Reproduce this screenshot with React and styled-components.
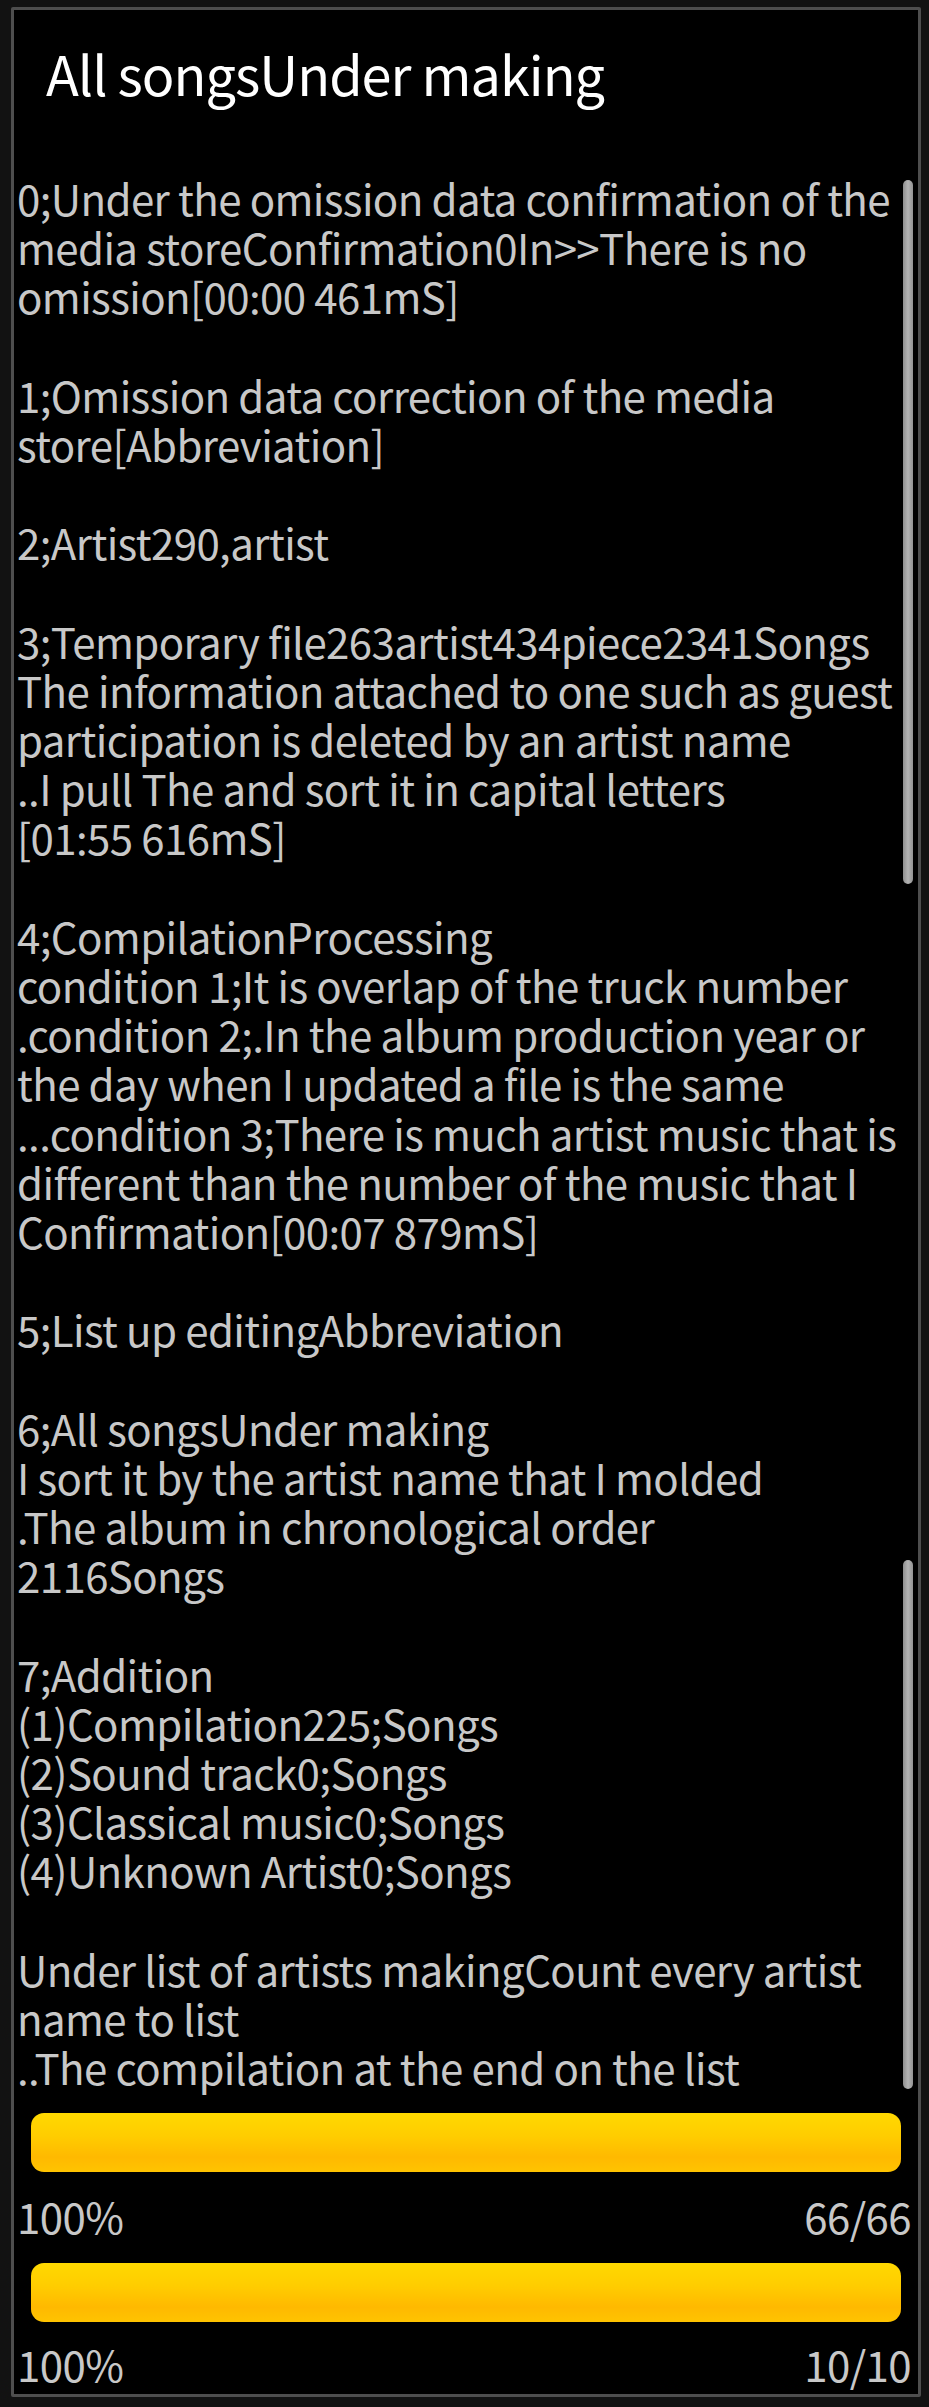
import React from "react";
import styled, { createGlobalStyle } from "styled-components";

const Global = createGlobalStyle`
  html, body { margin: 0; padding: 0; background: #121212; }
  body { font-family: "Noto Sans CJK JP", "Noto Sans", sans-serif; }
`;

const Screen = styled.div`
  width: 929px;
  height: 2407px;
  box-sizing: border-box;
  padding: 7px 8px 10px 11px;
  background: #121212;
`;

const Panel = styled.section`
  box-sizing: border-box;
  height: 100%;
  border: 3px solid #4e4e4e;
  border-radius: 2px;
  background: #000;
  display: flex;
  flex-direction: column;
`;

const Title = styled.h1`
  margin: 0;
  padding: 29px 0 0 32px;
  font-family: "Noto Sans CJK JP", "Noto Sans", sans-serif;
  font-weight: 400;
  font-size: 54px;
  letter-spacing: -1px;
  line-height: 68px;
  color: #fff;
  white-space: nowrap;
`;

const LogArea = styled.div`
  position: relative;
  margin-top: 66px;
  padding-left: 3px;
`;

const LogLine = styled.div`
  font-size: 42px;
  letter-spacing: -0.6px;
  line-height: 49.2px;
  height: 49.2px;
  color: #c8c8c8;
  white-space: pre;
`;

const ScrollThumb = styled.div`
  position: absolute;
  right: 5px;
  width: 10px;
  border-radius: 5px;
  background: linear-gradient(to right, #8e8e8e, #b4b4b4 50%, #939393);
`;

const Bar = styled.div`
  margin: ${(p) => p.$top}px 17px 0 17px;
  height: 59px;
  border-radius: 13px;
  background: linear-gradient(
    to bottom,
    #ffd900 0%,
    #ffcc00 40%,
    #ffb900 75%,
    #ffc400 100%
  );
`;

const LabelRow = styled.div`
  display: flex;
  justify-content: space-between;
  margin-top: ${(p) => p.$top}px;
  padding: 0 7px 0 3px;
  font-size: 42px;
  letter-spacing: -0.6px;
  line-height: 49.2px;
  color: #c8c8c8;
`;

const lines = [
  "0;Under the omission data confirmation of the",
  "media storeConfirmation0In>>There is no",
  "omission[00:00 461mS]",
  "",
  "1;Omission data correction of the media",
  "store[Abbreviation]",
  "",
  "2;Artist290,artist",
  "",
  "3;Temporary file263artist434piece2341Songs",
  "The information attached to one such as guest",
  "participation is deleted by an artist name",
  "..I pull The and sort it in capital letters",
  "[01:55 616mS]",
  "",
  "4;CompilationProcessing",
  "condition 1;It is overlap of the truck number",
  ".condition 2;.In the album production year or",
  "the day when I updated a file is the same",
  "...condition 3;There is much artist music that is",
  "different than the number of the music that I",
  "Confirmation[00:07 879mS]",
  "",
  "5;List up editingAbbreviation",
  "",
  "6;All songsUnder making",
  "I sort it by the artist name that I molded",
  ".The album in chronological order",
  "2116Songs",
  "",
  "7;Addition",
  "(1)Compilation225;Songs",
  "(2)Sound track0;Songs",
  "(3)Classical music0;Songs",
  "(4)Unknown Artist0;Songs",
  "",
  "Under list of artists makingCount every artist",
  "name to list",
  "..The compilation at the end on the list",
];

const progress = [
  { pct: "100%", count: "66/66", barTop: 22, labelTop: 19 },
  { pct: "100%", count: "10/10", barTop: 22, labelTop: 17 },
];

export default function App() {
  return (
    <>
      <Global />
      <Screen>
        <Panel>
          <Title>All songsUnder making</Title>
          <LogArea>
            {lines.map((t, i) => (
              <LogLine key={i}>{t}</LogLine>
            ))}
            <ScrollThumb style={{ top: 7, height: 704 }} />
            <ScrollThumb style={{ top: 1387, height: 529 }} />
          </LogArea>
          {progress.map((p, i) => (
            <React.Fragment key={i}>
              <Bar $top={p.barTop} />
              <LabelRow $top={p.labelTop}>
                <span>{p.pct}</span>
                <span>{p.count}</span>
              </LabelRow>
            </React.Fragment>
          ))}
        </Panel>
      </Screen>
    </>
  );
}
